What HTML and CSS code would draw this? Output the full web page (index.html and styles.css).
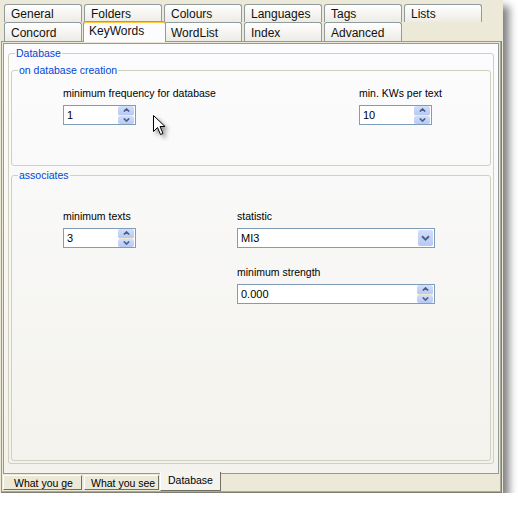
FILE: index.html
```html
<!DOCTYPE html>
<html>
	<head>
		<meta charset="UTF-8">
		<title>Settings</title>
		<link rel="stylesheet" href="styles.css">
	</head>
	<body>
		<div class="window">
			<div class="tabs tabs-back">
				<span class="tab">General</span>
				<span class="tab">Folders</span>
				<span class="tab">Colours</span>
				<span class="tab">Languages</span>
				<span class="tab">Tags</span>
				<span class="tab">Lists</span>
			</div>
			<div class="tabs tabs-front">
				<span class="tab">Concord</span>
				<span class="tab ac">KeyWords</span>
				<span class="tab">WordList</span>
				<span class="tab">Index</span>
				<span class="tab">Advanced</span>
			</div>
			<div class="page">
				<div class="subpage">
					<fieldset class="group group-db">
						<legend>Database</legend>
						<fieldset class="group group-creation">
							<legend>on database creation</legend>
							<div class="row">
								<div class="field field-freq">
									<label>minimum frequency for database</label>
									<div class="spin">
										<span class="value">1</span>
										<span class="btns">
											<i><svg width="7" height="4" viewBox="0 0 7 4"><path d="M0.8 3.6 L3.5 0.9 L6.2 3.6" fill="none" stroke="#4d6185" stroke-width="1.6"/></svg></i>
											<i><svg width="7" height="4" viewBox="0 0 7 4"><path d="M0.8 0.4 L3.5 3.1 L6.2 0.4" fill="none" stroke="#4d6185" stroke-width="1.6"/></svg></i>
										</span>
									</div>
								</div>
								<div class="field">
									<label>min. KWs per text</label>
									<div class="spin">
										<span class="value">10</span>
										<span class="btns">
											<i><svg width="7" height="4" viewBox="0 0 7 4"><path d="M0.8 3.6 L3.5 0.9 L6.2 3.6" fill="none" stroke="#4d6185" stroke-width="1.6"/></svg></i>
											<i><svg width="7" height="4" viewBox="0 0 7 4"><path d="M0.8 0.4 L3.5 3.1 L6.2 0.4" fill="none" stroke="#4d6185" stroke-width="1.6"/></svg></i>
										</span>
									</div>
								</div>
							</div>
						</fieldset>
						<fieldset class="group group-assoc">
							<legend>associates</legend>
							<div class="grid">
								<div class="field">
									<label>minimum texts</label>
									<div class="spin">
										<span class="value">3</span>
										<span class="btns">
											<i><svg width="7" height="4" viewBox="0 0 7 4"><path d="M0.8 3.6 L3.5 0.9 L6.2 3.6" fill="none" stroke="#4d6185" stroke-width="1.6"/></svg></i>
											<i><svg width="7" height="4" viewBox="0 0 7 4"><path d="M0.8 0.4 L3.5 3.1 L6.2 0.4" fill="none" stroke="#4d6185" stroke-width="1.6"/></svg></i>
										</span>
									</div>
								</div>
								<div class="field">
									<label>statistic</label>
									<div class="combo">
										<span class="value">MI3</span>
										<span class="drop">
											<svg width="9" height="6" viewBox="0 0 9 6"><path d="M1 1.2 L4.5 4.6 L8 1.2" fill="none" stroke="#4d6185" stroke-width="2"/></svg>
										</span>
									</div>
								</div>
								<div class="field field-strength">
									<label>minimum strength</label>
									<div class="spin spin-wide">
										<span class="value">0.000</span>
										<span class="btns">
											<i><svg width="7" height="4" viewBox="0 0 7 4"><path d="M0.8 3.6 L3.5 0.9 L6.2 3.6" fill="none" stroke="#4d6185" stroke-width="1.6"/></svg></i>
											<i><svg width="7" height="4" viewBox="0 0 7 4"><path d="M0.8 0.4 L3.5 3.1 L6.2 0.4" fill="none" stroke="#4d6185" stroke-width="1.6"/></svg></i>
										</span>
									</div>
								</div>
							</div>
						</fieldset>
					</fieldset>
				</div>
				<div class="subtabs">
					<span class="subtab st1">What you ge</span>
					<span class="subtab st2">What you see</span>
					<span class="subtab st3 ac">Database</span>
				</div>
			</div>
			<svg class="cursor" width="14" height="22" viewBox="0 0 14 22">
				<path d="M0.5 0.5 L0.5 16.5 L4.5 12.5 L7.5 19.5 L10 18.5 L7 11.5 L12 11.5 Z" fill="#fff" stroke="#000" stroke-width="1" stroke-linejoin="miter"/>
			</svg>
		</div>
	</body>
</html>
```

FILE: styles.css
```css
*{margin: 0;padding: 0;box-sizing: border-box;}
body{background: #fff;font-family: "Liberation Sans", Arial, sans-serif;}

.window{position: relative; width: 503px; height: 493px; background: #ece9d8; box-shadow: 6px 6px 8px rgba(0,0,0,0.5);}

/* top tab strip, two rows */
.tabs{display: flex; align-items: flex-start; gap: 2px; padding-left: 4px;}
.tabs-back{padding-top: 4px; height: 22px;}
.tabs-front{height: 19px;}
.tab{width: 78px; height: 18px; padding-left: 6px; border: 1px solid #919b9c; border-bottom: none; border-radius: 3px 3px 0 0; background: linear-gradient(#fff, #ecebe5); font-size: 12px; line-height: 18px; color: #111; white-space: nowrap;}
.tabs-front .tab{height: 19px; line-height: 20px;}
.tabs-front .tab.ac{position: relative; z-index: 2; width: 83px; height: 21px; margin: -1px -4px 0 -1px; padding-left: 5px; line-height: 19px; background: #fcfcfe; border-top: 1px solid #e68b2c; box-shadow: inset 0 1px 0 #ffc73c;}

/* tab page */
.page{display: flex; flex-direction: column; width: 501px; height: 452px; margin-left: 1px; border: 1px solid #919b9c; border-right-color: #807e73; border-bottom-color: #807e73; box-shadow: inset -1px -1px 0 #aca899;}
.subpage{flex: 1; margin: 1px 2px 0 1px; padding: 3px 4px 9px 4px; display: flex; flex-direction: column; border: 1px solid #919b9c; background: linear-gradient(#fcfcfe, #f3f2ec);}

/* group boxes */
.group{min-width: 0; border: 1px solid #d0d0bf; border-radius: 3px; padding: 0 2px;}
.group legend{margin-left: 4px; padding: 0 1px; font-size: 10.5px; line-height: 13px; color: #0046d5;}
.group-db{flex: 1; display: flex; flex-direction: column; padding-top: 4px; padding-bottom: 2px;}
.group-creation{padding-top: 10px; padding-bottom: 40px;}
.group-assoc{flex: 1; margin-top: 3px; padding-top: 28px;}

.row{display: flex; padding-left: 49px;}
.field-freq{width: 296px;}
.grid{display: grid; grid-template-columns: 174px 198px; row-gap: 18px; padding-left: 49px;}
.field-strength{grid-column: 2;}

.field label{display: block; margin-bottom: 5px; font-size: 10.5px; line-height: 13px; color: #000; white-space: nowrap;}

/* spin edit and combo box */
.spin, .combo{display: flex; width: 73px; height: 20px; border: 1px solid #7f9db9; background: #fff;}
.spin-wide, .combo{width: 198px;}
.value{flex: 1; padding-left: 3px; font-size: 11px; line-height: 18px; color: #000;}
.btns{display: flex; flex-direction: column; width: 16px; margin-right: 1px;}
.btns i{flex: 1; display: flex; align-items: center; justify-content: center; border-radius: 2px; background: linear-gradient(#d3def9, #b6c9f5);}
.btns i:first-child{border-bottom: 1px solid #efe9cf;}
.btns svg{display: block;}
.drop{display: flex; align-items: center; justify-content: center; width: 15px; margin: 1px 1px 1px 0; border-radius: 2px; background: linear-gradient(#d3def9, #b6c9f5);}

/* bottom tab strip */
.subtabs{display: flex; align-items: flex-start; height: 18px; padding-left: 1px;}
.subtab{height: 15px; margin-top: 1px; border: 1px solid #fff; border-right-color: #716f64; border-bottom-color: #716f64; background: #ece9d8; font-size: 10.5px; line-height: 14px; color: #000; text-align: center; white-space: nowrap; overflow: hidden;}
.st1{width: 79px; padding-left: 10px; text-align: left;}
.st2{width: 75px; margin-left: 2px; padding-left: 6px; text-align: left;}
.st3{width: 61px; margin-left: 1px;}
.subtab.ac{position: relative; z-index: 2; height: 19px; margin-top: -2px; padding-top: 2px; background: #f4f3ee; border-top: none; line-height: 13px;}

.cursor{position: absolute; left: 153px; top: 115px; filter: drop-shadow(3px 3px 2px rgba(0,0,0,0.4));}
```
